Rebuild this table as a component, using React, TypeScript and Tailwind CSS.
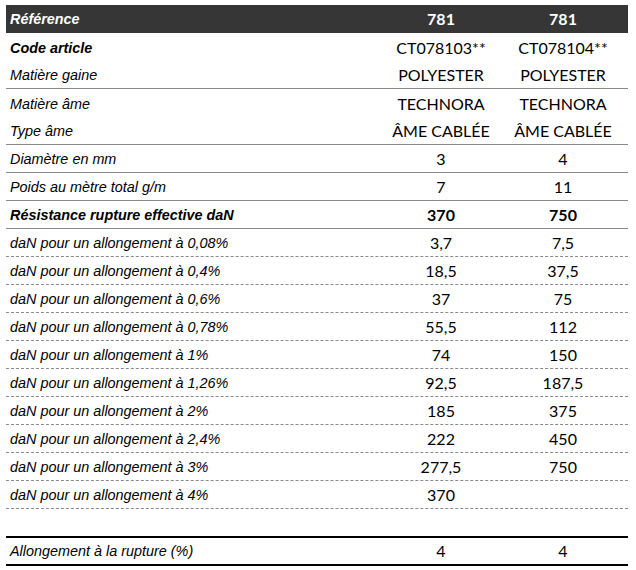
const rows: {
  label: string;
  a: string;
  b: string;
  bold?: 'label' | 'all';
  line?: 'none' | 'solid' | 'dashed';
}[] = [
  { label: 'Code article', a: 'CT078103**', b: 'CT078104**', bold: 'label', line: 'none' },
  { label: 'Matière gaine', a: 'POLYESTER', b: 'POLYESTER', line: 'solid' },
  { label: 'Matière âme', a: 'TECHNORA', b: 'TECHNORA', line: 'none' },
  { label: 'Type âme', a: 'ÂME CABLÉE', b: 'ÂME CABLÉE', line: 'solid' },
  { label: 'Diamètre en mm', a: '3', b: '4', line: 'solid' },
  { label: 'Poids au mètre total g/m', a: '7', b: '11', line: 'solid' },
  { label: 'Résistance rupture effective daN', a: '370', b: '750', bold: 'all', line: 'solid' },
  { label: 'daN pour un allongement à 0,08%', a: '3,7', b: '7,5', line: 'dashed' },
  { label: 'daN pour un allongement à 0,4%', a: '18,5', b: '37,5', line: 'dashed' },
  { label: 'daN pour un allongement à 0,6%', a: '37', b: '75', line: 'dashed' },
  { label: 'daN pour un allongement à 0,78%', a: '55,5', b: '112', line: 'dashed' },
  { label: 'daN pour un allongement à 1%', a: '74', b: '150', line: 'dashed' },
  { label: 'daN pour un allongement à 1,26%', a: '92,5', b: '187,5', line: 'dashed' },
  { label: 'daN pour un allongement à 2%', a: '185', b: '375', line: 'dashed' },
  { label: 'daN pour un allongement à 2,4%', a: '222', b: '450', line: 'dashed' },
  { label: 'daN pour un allongement à 3%', a: '277,5', b: '750', line: 'dashed' },
  { label: 'daN pour un allongement à 4%', a: '370', b: '', line: 'dashed' },
];

const labelFont = "font-['Liberation_Sans',Arial,sans-serif] italic text-[14.4px] pl-[4px] pt-[2px]";
const valueFont = "font-['Lato',sans-serif] text-[16px] text-center";

export default function App() {
  return (
    <div className="w-[636px] h-[570px] bg-white pt-[5px] pl-[6px]">
      <div className="w-[622px]">
        {/* Header */}
        <div className="grid h-[28px] grid-cols-[374px_122px_122px] items-center bg-[#363636] text-white">
          <div className={`${labelFont} font-bold`}>Référence</div>
          <div className={`${valueFont} font-bold`}>781</div>
          <div className={`${valueFont} font-bold`}>781</div>
        </div>

        {rows.map((r) => (
          <div
            key={r.label}
            className={`grid h-[28px] grid-cols-[374px_122px_122px] items-center pt-[1px] text-black ${
              r.line === 'solid'
                ? 'border-b border-[#8a8a8a]'
                : r.line === 'dashed'
                  ? 'border-b border-dashed border-[#8a8a8a]'
                  : ''
            }`}
          >
            <div className={`${labelFont} ${r.bold ? 'font-bold' : ''}`}>{r.label}</div>
            <div className={`${valueFont} ${r.bold === 'all' ? 'font-bold' : ''}`}>{r.a}</div>
            <div className={`${valueFont} ${r.bold === 'all' ? 'font-bold' : ''}`}>{r.b}</div>
          </div>
        ))}

        {/* Empty spacer row */}
        <div className="h-[27px]" />

        <div className="grid h-[30px] grid-cols-[374px_122px_122px] items-center border-y-2 border-black text-black">
          <div className={labelFont}>Allongement à la rupture (%)</div>
          <div className={valueFont}>4</div>
          <div className={valueFont}>4</div>
        </div>
      </div>
    </div>
  );
}
